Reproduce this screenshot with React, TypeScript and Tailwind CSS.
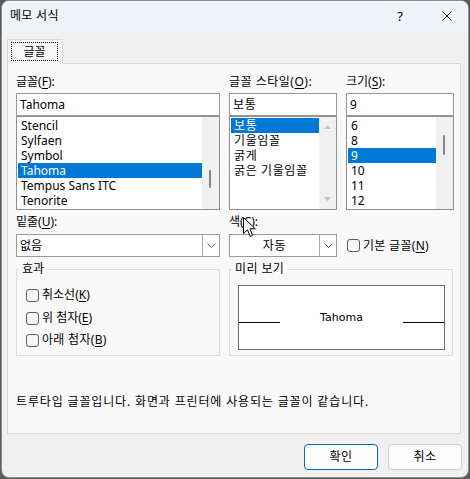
import React from "react";

function Item({ text, sel, wide }: { text: string; sel?: boolean; wide?: boolean }) {
  const base = wide
    ? "h-[15px] leading-[15px] pl-[3px] whitespace-nowrap tracking-[0.6px]"
    : "h-[15px] leading-[15px] pl-[3px] whitespace-nowrap";
  return <div className={sel ? base + " bg-[#0078d7] text-white" : base}>{text}</div>;
}

function ListBox({
  items,
  sel,
  scroll,
  wide,
}: {
  items: string[];
  sel: number;
  scroll: React.ReactNode;
  wide?: boolean;
}) {
  return (
    <div className="h-[94px] border border-[#8f8f8f] bg-white flex">
      <div className="flex-1 pl-px pt-px overflow-hidden">
        {items.map((t, i) => (
          <Item key={t} text={t} sel={i === sel} wide={wide} />
        ))}
      </div>
      <div className="w-[17px] bg-[#f0f0f0] flex flex-col">{scroll}</div>
    </div>
  );
}

function Label({ pre, key1, post }: { pre: string; key1: string; post?: string }) {
  return (
    <span className="whitespace-nowrap">
      {pre}(<span className="underline underline-offset-2">{key1}</span>){post ?? ""}
    </span>
  );
}

function Chevron() {
  return (
    <svg width="9" height="5" viewBox="0 0 9 5">
      <polyline points="0.5,0.5 4.5,4.5 8.5,0.5" fill="none" stroke="#606060" strokeWidth="1" />
    </svg>
  );
}

function Check() {
  return <div className="w-[13px] h-[13px] rounded-[3px] border border-[#5f5f5f] bg-[#f6f6f6] shrink-0" />;
}

export default function App() {
  return (
    <div className="w-[470px] h-[479px] bg-[#5a5a5a] pl-px overflow-hidden text-[12px] leading-[16px] text-black font-['Noto_Sans','Noto_Sans_CJK_KR',sans-serif]">
      <div className="w-[468px] h-[478px] rounded-[8px] border border-[#8e8e8e] bg-[#f0f0f0] overflow-hidden flex flex-col">
        {/* Title bar */}
        <div className="h-[30px] shrink-0 bg-[#eef4f9] flex items-center">
          <span className="ml-[8px] tracking-[0.3px]">메모 서식</span>
          <span className="ml-auto w-[20px] text-center text-[13px]">?</span>
          <svg className="ml-[32px] mr-[16px]" width="10" height="10" viewBox="0 0 10 10">
            <path d="M0.5 0.5 L9.5 9.5 M9.5 0.5 L0.5 9.5" stroke="#1a1a1a" strokeWidth="1" />
          </svg>
        </div>

        {/* Body */}
        <div className="pt-[8px] flex flex-col">
          {/* Tab */}
          <div className="ml-[5px] w-[56px] h-[25px] -mb-px relative z-10 border border-b-0 border-[#d9d9d9] bg-[#f9f9f9] pl-[3px] pt-[2px]">
            <div className="w-[47px] h-[19px] border border-dotted border-black flex items-center justify-center">
              글꼴
            </div>
          </div>

          {/* Panel */}
          <div className="ml-[5px] w-[454px] h-[371px] border border-[#d9d9d9] bg-[#f9f9f9] pl-[8px] pt-[10px] flex flex-col">
            {/* Row 1: font / style / size */}
            <div className="flex gap-[9px]">
              <div className="w-[204px] flex flex-col">
                <Label pre="글꼴" key1="F" post=":" />
                <div className="mt-[3px] h-[23px] border border-[#999999] bg-white pl-[3px] flex items-center">Tahoma</div>
                <ListBox
                  items={["Stencil", "Sylfaen", "Symbol", "Tahoma", "Tempus Sans ITC", "Tenorite"]}
                  sel={3}
                  scroll={
                    <div className="pt-[53px] pl-[7px]">
                      <div className="w-[2px] h-[18px] bg-[#858585] rounded-full" />
                    </div>
                  }
                />
              </div>
              <div className="w-[108px] flex flex-col">
                <span className="tracking-[0.5px]">
                  <Label pre="글꼴 스타일" key1="O" post=":" />
                </span>
                <div className="mt-[3px] h-[23px] border border-[#999999] bg-white pl-[3px] flex items-center tracking-[0.6px]">
                  보통
                </div>
                <ListBox
                  items={["보통", "기울임꼴", "굵게", "굵은 기울임꼴"]}
                  sel={0}
                  wide
                  scroll={
                    <div className="h-full flex flex-col justify-between items-center pt-[8px] pb-[8px]">
                      <svg width="7" height="4" viewBox="0 0 7 4">
                        <polygon points="0,4 3.5,0 7,4" fill="#c2c2c2" />
                      </svg>
                      <svg width="7" height="4" viewBox="0 0 7 4">
                        <polygon points="0,0 7,0 3.5,4" fill="#c2c2c2" />
                      </svg>
                    </div>
                  }
                />
              </div>
              <div className="w-[108px] flex flex-col">
                <Label pre="크기" key1="S" post=":" />
                <div className="mt-[3px] h-[23px] border border-[#999999] bg-white pl-[3px] flex items-center">9</div>
                <ListBox
                  items={["6", "8", "9", "10", "11", "12"]}
                  sel={2}
                  scroll={
                    <div className="pt-[18px] pl-[7px]">
                      <div className="w-[2px] h-[20px] bg-[#858585] rounded-full" />
                    </div>
                  }
                />
              </div>
            </div>

            {/* Row 2: underline / color / default */}
            <div className="mt-[4px] flex gap-[9px]">
              <div className="w-[204px] flex flex-col">
                <Label pre="밑줄" key1="U" post=":" />
                <div className="mt-[4px] h-[23px] border border-[#999999] bg-white flex">
                  <div className="flex-1 pl-[3px] flex items-center">없음</div>
                  <div className="w-[17px] border-l border-[#a8a8a8] flex items-center justify-center">
                    <Chevron />
                  </div>
                </div>
              </div>
              <div className="w-[108px] flex flex-col relative">
                <Label pre="색" key1="C" post=":" />
                <svg className="absolute left-[14px] top-[3px] z-20" width="13" height="21" viewBox="0 0 13 21">
                  <path
                    d="M0.5 0.5 L0.5 16.5 L4.5 12.8 L7.2 19.5 L9.6 18.5 L7 11.8 L12.3 11.8 Z"
                    fill="white"
                    stroke="black"
                    strokeWidth="1"
                    strokeLinejoin="miter"
                  />
                </svg>
                <div className="mt-[4px] h-[23px] border border-[#999999] bg-white flex">
                  <div className="flex-1 flex items-center justify-center tracking-[0.6px]">자동</div>
                  <div className="w-[17px] border-l border-[#a8a8a8] flex items-center justify-center">
                    <Chevron />
                  </div>
                </div>
              </div>
              <div className="w-[108px] flex flex-col">
                <div className="h-[16px]" />
                <div className="mt-[4px] h-[23px] flex items-center pl-px">
                  <Check />
                  <span className="ml-[3px] tracking-[0.3px]">
                    <Label pre="기본 글꼴" key1="N" />
                  </span>
                </div>
              </div>
            </div>

            {/* Row 3: effects / preview */}
            <div className="mt-[12px] flex gap-[9px]">
              <div className="w-[204px] h-[87px] border border-[#dcdcdc] flex flex-col">
                <span className="-mt-[9px] ml-[2px] px-[3px] w-fit bg-[#f9f9f9]">효과</span>
                <div className="mt-[10px] ml-[9px] h-[16px] flex items-center">
                  <Check />
                  <span className="ml-[3px]">
                    <Label pre="취소선" key1="K" />
                  </span>
                </div>
                <div className="mt-[7px] ml-[9px] h-[16px] flex items-center">
                  <Check />
                  <span className="ml-[3px]">
                    <Label pre="위 첨자" key1="E" />
                  </span>
                </div>
                <div className="mt-[6px] ml-[9px] h-[16px] flex items-center">
                  <Check />
                  <span className="ml-[3px] tracking-[0.3px]">
                    <Label pre="아래 첨자" key1="B" />
                  </span>
                </div>
              </div>
              <div className="w-[224px] h-[87px] border border-[#dcdcdc] flex flex-col">
                <span className="-mt-[9px] ml-[2px] px-[3px] w-fit bg-[#f9f9f9] tracking-[0.4px]">미리 보기</span>
                <div className="mt-[8px] ml-[8px] w-[207px] h-[65px] border border-[#6d6d6d] bg-white flex items-start">
                  <div className="mt-[36px] w-[41px] h-px bg-black" />
                  <div className="mt-[24px] flex-1 text-center text-[11px] leading-[16px] font-['DejaVu_Sans',sans-serif]">
                    Tahoma
                  </div>
                  <div className="mt-[36px] w-[41px] h-px bg-black" />
                </div>
              </div>
            </div>

            {/* Description */}
            <div className="mt-[38px] whitespace-nowrap tracking-[0.85px]">
              트루타입 글꼴입니다. 화면과 프린터에 사용되는 글꼴이 같습니다.
            </div>
          </div>

          {/* Buttons */}
          <div className="mt-[10px] mr-[6px] flex justify-end gap-[10px]">
            <div className="w-[74px] h-[26px] rounded-[4px] border border-[#0067c0] bg-[#fdfdfd] flex items-center justify-center tracking-[0.5px]">
              확인
            </div>
            <div className="w-[74px] h-[26px] rounded-[4px] border border-[#d0d0d0] bg-[#fdfdfd] flex items-center justify-center tracking-[0.5px]">
              취소
            </div>
          </div>
        </div>
      </div>
    </div>
  );
}
